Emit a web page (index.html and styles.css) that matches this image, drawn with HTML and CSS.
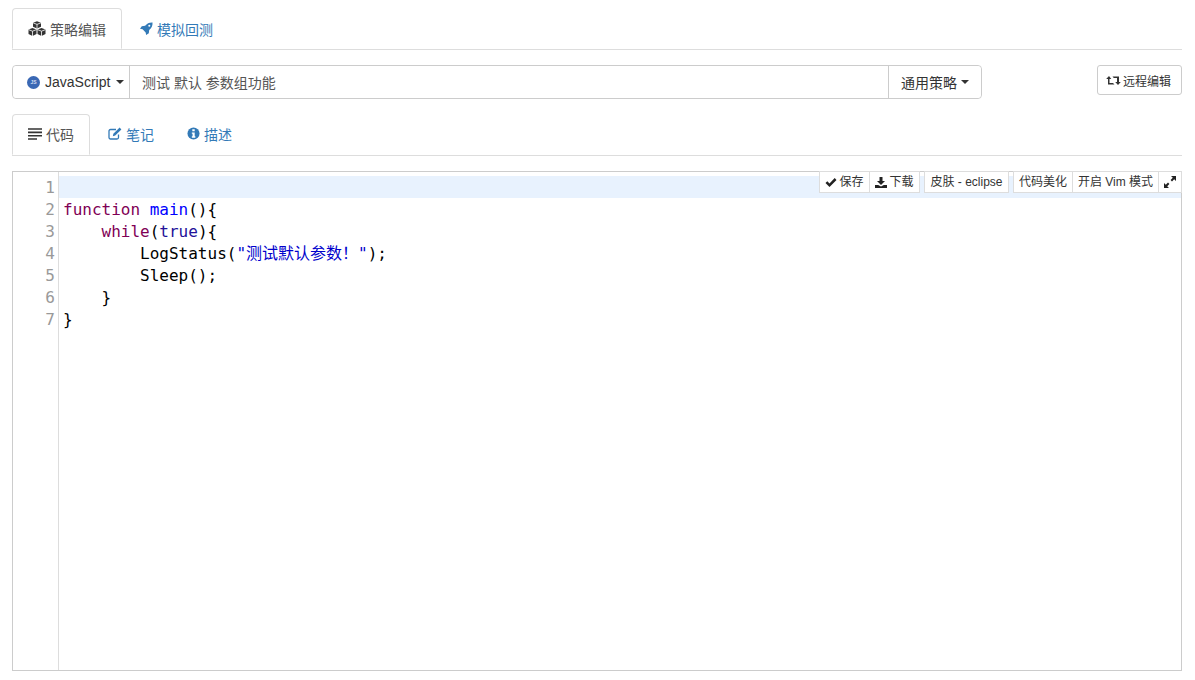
FILE: index.html
```html
<!DOCTYPE html>
<html lang="zh">
<head>
<meta charset="utf-8">
<title>策略编辑</title>
<link rel="stylesheet" href="styles.css">
</head>
<body>
<nav class="tabs tabs-main">
  <a class="tab active"><svg class="ic ic-cubes" viewBox="0 0 18 16"><path d="M9 .2l4 1.600v4L9 7.500 5 5.800v-4zM4.500 7l4 1.600v4.400l-4 2-4-2V8.600zM13.500 7l4 1.600v4.400l-4 2-4-2V8.600z" fill="#333"/><path d="M5 1.800L9 3.400l4-1.600M9 3.400v4.100M.5 8.600l4 1.600 4-1.600M4.500 10.200V15M9.500 8.600l4 1.600 4-1.600M13.500 10.200V15" stroke="#fff" stroke-width=".8" fill="none"/></svg>策略编辑</a>
  <a class="tab"><svg class="ic ic-rocket" viewBox="0 0 14 14"><path d="M13.500.5c.2 3.300-1 6-3.600 8l-.4 3.600L6.600 14l-.5-2.800-3.300-3.300L0 7.400l1.900-2.900 3.600-.4C7.500 1.500 10.200.3 13.500.5z" fill="#337ab7"/><circle cx="10" cy="4" r="1.100" fill="#fff"/></svg>模拟回测</a>
</nav>

<section class="form-row">
  <div class="input-group">
    <button class="addon addon-lang"><span class="js-badge">JS</span>JavaScript<i class="caret"></i></button>
    <div class="name-field">测试 默认 参数组功能</div>
    <button class="addon addon-type">通用策略<i class="caret"></i></button>
  </div>
  <button class="remote"><svg class="ic-retweet" viewBox="0 0 15 11"><path d="M3 1L.2 4h1.800v5.500h6.500L7 8H3.500V4h1.800zM6.500 1.500H13V7h1.800L12 10 9.200 7H11V3H7.800z" fill="#333"/></svg>远程编辑</button>
</section>

<nav class="tabs tabs-sub">
  <a class="tab active"><svg class="ic ic-lines" viewBox="0 0 14 12"><path d="M0 1h14M0 4.400h14M0 7.800h14M0 11h9" stroke="#333" stroke-width="1.600"/></svg>代码</a>
  <a class="tab"><svg class="ic ic-edit" viewBox="0 0 14 13"><path d="M10.500 7.500V10.500a1.500 1.500 0 0 1-1.500 1.500H2.500A1.500 1.500 0 0 1 1 10.500V4a1.500 1.500 0 0 1 1.500-1.500H8" fill="none" stroke="#337ab7" stroke-width="1.300"/><path d="M11.600.6l1.800 1.800L7.200 8.600l-2.400.6.600-2.400z" fill="#337ab7"/></svg>笔记</a>
  <a class="tab"><svg class="ic ic-info" viewBox="0 0 14 14"><circle cx="7" cy="7" r="6.500" fill="#337ab7"/><path d="M5.700 2.500h2.600v2H5.700zM5.200 5.800h3.100v4.200h.7v1.500H5.200V10h.8V7.300h-.8z" fill="#fff"/></svg>描述</a>
</nav>

<section class="editor">
  <div class="gutter">
    <div class="num active-num">1</div><div class="num">2</div><div class="num">3</div><div class="num">4</div><div class="num">5</div><div class="num">6</div><div class="num">7</div>
  </div>
  <div class="code">
    <div class="line active-line"> </div>
    <div class="line"><span class="kw">function</span> <span class="fn">main</span>(){</div>
    <div class="line">    <span class="kw">while</span>(<span class="bool">true</span>){</div>
    <div class="line">        LogStatus(<span class="str">"测试默认参数！"</span>);</div>
    <div class="line">        Sleep();</div>
    <div class="line">    }</div>
    <div class="line">}</div>
  </div>
  <div class="toolbar">
    <div class="tb-group">
      <a class="tb-btn tb-save"><svg class="tb-ic" viewBox="0 0 12 10"><path d="M.5 5.500L2.300 3.700 4.500 5.900 9.700.6l1.800 1.800-7 7z" fill="#222"/></svg>保存</a>
      <a class="tb-btn tb-down"><svg class="tb-ic" viewBox="0 0 12 11"><path d="M4.500 0h3v4H10L6 8 2 4h2.500zM0 8h3.200L6 9.500 8.800 8H12v3H0z" fill="#222"/></svg>下载</a>
    </div>
    <div class="tb-group"><a class="tb-btn tb-skin">皮肤 - eclipse</a></div>
    <div class="tb-group">
      <a class="tb-btn tb-fmt">代码美化</a>
      <a class="tb-btn tb-vim">开启 Vim 模式</a>
      <a class="tb-btn tb-full"><svg class="tb-ic-full" viewBox="0 0 12 12"><path d="M7 0h5v5l-1.800-1.800L8 5.400 6.600 4l2.200-2.200zM5 12H0V7l1.800 1.800L4 6.600 5.400 8l-2.200 2.200z" fill="#222"/></svg></a>
    </div>
  </div>
</section>
</body>
</html>
```

FILE: styles.css
```css
* { box-sizing: border-box; }
html, body { margin: 0; padding: 0; background: #fff; }
body {
  width: 1195px;
  height: 680px;
  padding: 8px 13px 0 12px;
  overflow: hidden;
  font-family: "Liberation Sans", "Noto Sans CJK SC", sans-serif;
  font-size: 14px;
  color: #555;
}
.tabs {
  display: flex;
  border-bottom: 1px solid #ddd;
}
.tabs-main { height: 42px; }
.tabs-sub { height: 42px; margin-top: 15px; }
.tab {
  display: flex;
  align-items: center;
  height: 100%;
  padding: 0 15px;
  margin-bottom: -1px;
  border: 1px solid transparent;
  border-radius: 4px 4px 0 0;
  color: #337ab7;
  white-space: nowrap;
}
.tab.active {
  color: #555;
  background: #fff;
  border-color: #ddd;
  border-bottom-color: #fff;
}
.tabs-sub .tab { padding-bottom: 2px; }
.ic { display: block; flex: none; margin-right: 4px; }
.ic-cubes { width: 18px; height: 16px; }
.ic-rocket { width: 13px; height: 13px; }
.ic-lines { width: 14px; height: 12px; }
.ic-edit { width: 14px; height: 13px; }
.ic-info { width: 13px; height: 13px; }
.tabs-main .tab:nth-child(2) { padding-left: 17px; }
.tabs-sub .tab:nth-child(2) { margin-left: 2px; }
.tabs-sub .tab:nth-child(3) { margin-left: 1px; }

.form-row {
  display: flex;
  justify-content: space-between;
  align-items: flex-start;
  margin-top: 15px;
}
.input-group {
  display: flex;
  width: 970px;
  height: 34px;
  border: 1px solid #ccc;
  border-radius: 4px;
}
.addon {
  display: flex;
  align-items: center;
  background: #fff;
  border: 0;
  padding: 0;
  font: inherit;
  color: #333;
  white-space: nowrap;
}
.addon-lang {
  width: 117px;
  padding-left: 14px;
  border-right: 1px solid #ccc;
  border-radius: 4px 0 0 4px;
}
.js-badge {
  display: flex;
  align-items: center;
  justify-content: center;
  width: 13px;
  height: 13px;
  margin-right: 5px;
  border-radius: 50%;
  background: #3a68b4;
  color: #cfdcf2;
  font-size: 5px;
  font-weight: 700;
}
.caret {
  width: 0;
  height: 0;
  margin-left: 6px;
  border-top: 4px solid #333;
  border-left: 4px solid transparent;
  border-right: 4px solid transparent;
}
.addon-type .caret { margin-left: 4px; }
.name-field {
  flex: 1;
  display: flex;
  align-items: center;
  padding-left: 12px;
  color: #555;
}
.addon-type {
  width: 93px;
  padding-left: 12px;
  border-left: 1px solid #ccc;
  border-radius: 0 4px 4px 0;
}
.remote {
  display: flex;
  align-items: center;
  justify-content: center;
  width: 85px;
  height: 30px;
  padding: 0 2px 0 0;
  background: #fff;
  border: 1px solid #ccc;
  border-radius: 3px;
  font: inherit;
  font-size: 12px;
  color: #333;
}
.ic-retweet { display: block; width: 15px; height: 11px; margin-right: 2px; }

.editor {
  position: relative;
  display: flex;
  height: 500px;
  margin-top: 15px;
  padding-top: 4px;
  border: 1px solid #ccc;
  font-family: "DejaVu Sans Mono", "Noto Sans CJK SC", monospace;
  font-size: 16px;
  line-height: 22px;
  color: #000;
}
.editor::before {
  content: "";
  position: absolute;
  left: 45px;
  top: 0;
  bottom: 0;
  width: 1px;
  background: #ddd;
}
.gutter {
  flex: none;
  width: 46px;
  padding: 1px 4px 0 0;
  text-align: right;
  color: #999;
}
.code { flex: 1; }
.line {
  height: 22px;
  padding: 1px 0 0 4px;
  white-space: pre;
}
.active-line { background: #e8f2fe; }
.kw { color: #7f0055; }
.fn { color: #00f; }
.bool { color: #219; }
.str { color: #00c; }

.toolbar {
  position: absolute;
  top: -1px;
  right: -1px;
  display: flex;
  gap: 4px;
  font-family: "Liberation Sans", "Noto Sans CJK SC", sans-serif;
  font-size: 12px;
  line-height: 20px;
  color: #333;
}
.tb-group { display: flex; }
.tb-btn {
  display: flex;
  align-items: center;
  justify-content: center;
  height: 22px;
  background: #fff;
  border: 1px solid #ddd;
  white-space: nowrap;
}
.tb-btn + .tb-btn { margin-left: -1px; }
.tb-save { width: 51px; }
.tb-down { width: 51px; }
.tb-skin { width: 85px; }
.tb-fmt { width: 60px; }
.tb-vim { width: 87px; }
.tb-full { width: 24px; }
.tb-ic { display: block; width: 12px; height: 11px; margin-right: 2px; }
.tb-ic-full { display: block; width: 12px; height: 12px; }
```
